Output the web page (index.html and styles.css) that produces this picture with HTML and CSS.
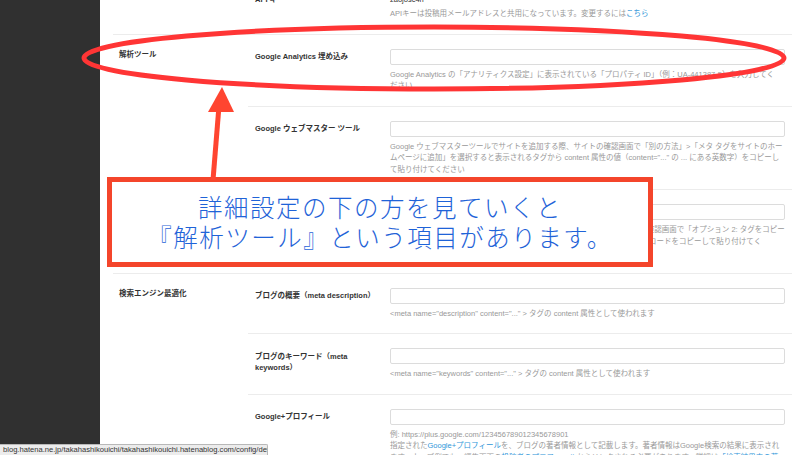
FILE: index.html
```html
<!DOCTYPE html>
<html lang="ja">
<head>
<meta charset="utf-8">
<title>詳細設定</title>
<link rel="stylesheet" href="styles.css">
</head>
<body>
<div class="page">
  <aside class="sidebar"></aside>
  <main class="main">
    <section class="section first">
      <div class="section-label"></div>
      <div class="rows">
        <div class="row">
          <div class="row-label top">API キー</div>
          <div class="field">
            <div class="value">zaojosc4n</div>
            <p class="desc tight">APIキーは投稿用メールアドレスと共用になっています。変更するには<a href="#">こちら</a></p>
          </div>
        </div>
      </div>
    </section>

    <section class="section">
      <div class="section-label">解析ツール</div>
      <div class="rows">
        <div class="row">
          <div class="row-label">Google Analytics 埋め込み</div>
          <div class="field">
            <div class="input"></div>
            <p class="desc">Google Analytics の「アナリティクス設定」に表示されている「プロパティ ID」（例：UA-441387-5）を入力してく<br>ださい</p>
          </div>
        </div>
        <div class="row">
          <div class="row-label">Google ウェブマスター ツール</div>
          <div class="field">
            <div class="input"></div>
            <p class="desc">Google ウェブマスターツールでサイトを追加する際、サイトの確認画面で「別の方法」&gt;「メタ タグをサイトのホー<br>ムページに追加」を選択すると表示されるタグから content 属性の値（content="..." の ... にある英数字）をコピーし<br>て貼り付けてください</p>
          </div>
        </div>
        <div class="row">
          <div class="row-label">Bing Webmaster Tools</div>
          <div class="field">
            <div class="input"></div>
            <p class="desc">Bing Webmaster Tools でサイトを追加する際、サイトの所有権の確認を行う確認画面で「オプション 2: タグをコピー<br>して既定の Web ページに貼り付けます」を選択し、表示されるタグから認証コードをコピーして貼り付けてく<br>ださい</p>
          </div>
        </div>
      </div>
    </section>

    <section class="section">
      <div class="section-label">検索エンジン最適化</div>
      <div class="rows">
        <div class="row">
          <div class="row-label">ブログの概要（meta description）</div>
          <div class="field">
            <div class="input"></div>
            <p class="desc">&lt;meta name="description" content="..." &gt; タグの content 属性として使われます</p>
          </div>
        </div>
        <div class="row">
          <div class="row-label">ブログのキーワード（meta keywords）</div>
          <div class="field">
            <div class="input"></div>
            <p class="desc">&lt;meta name="keywords" content="..." &gt; タグの content 属性として使われます</p>
          </div>
        </div>
        <div class="row">
          <div class="row-label">Google+プロフィール</div>
          <div class="field">
            <div class="input"></div>
            <p class="desc">例: https://plus.google.com/123456789012345678901<br>指定された<a href="#">Google+プロフィール</a>を、ブログの著者情報として記載します。著者情報はGoogle検索の結果に表示され<br>ます。ウェブ例でも、編集画面の<a href="#">投稿者のプロフィール</a>からリンクされる必要があります。詳細は<a href="#">「検索結果内の著者情報」</a>をご覧ください</p>
          </div>
        </div>
      </div>
    </section>
  </main>

  <div class="status">blog.hatena.ne.jp/takahashikouichi/takahashikouichi.hatenablog.com/config/detail</div>

  <svg class="marks" width="800" height="455" viewBox="0 0 800 455">
    <ellipse cx="434" cy="58" rx="350" ry="31" fill="none" stroke="#ff3535" stroke-width="5"/>
    <line x1="213" y1="180" x2="219" y2="106" stroke="#ff4530" stroke-width="5"/>
    <polygon points="222,87 208,112 234,112" fill="#ff4530"/>
  </svg>

  <div class="note">
    <p class="note-line">詳細設定の下の方を見ていくと</p>
    <p class="note-line">『解析ツール』という項目があります。</p>
  </div>
</div>
</body>
</html>
```

FILE: styles.css
```css
* { box-sizing: border-box; }

body {
  margin: 0;
  width: 800px;
  height: 455px;
  overflow: hidden;
  background: #fff;
  font-family: "Liberation Sans", "Noto Sans CJK JP", sans-serif;
  color: #333;
}

.page {
  position: relative;
  display: flex;
  width: 800px;
  height: 455px;
  overflow: hidden;
}

.sidebar {
  flex: none;
  width: 100px;
  background: #303030;
}

.main {
  flex: 1;
  padding: 0 8px 0 13px;
  background: #fff;
  overflow: hidden;
}

.section {
  display: flex;
  border-top: 1px solid #ececec;
}

.section.first {
  border-top: none;
  margin-top: -20px;
}

.section-label {
  flex: none;
  width: 135px;
  padding: 14px 0 0 6px;
  font-size: 7.5px;
  line-height: 11.5px;
  font-weight: bold;
  color: #333;
}

.rows {
  flex: 1;
}

.row {
  display: flex;
  padding: 14px 7px 14px 0;
}

.row + .row {
  border-top: 1px solid #ececec;
}

.row-label {
  flex: none;
  width: 142px;
  padding: 2.5px 10px 0 7px;
  font-size: 7.5px;
  line-height: 11.5px;
  font-weight: bold;
  color: #333;
}

.row-label.top {
  padding-top: 0;
}

.field {
  flex: 1;
}

.value {
  font-size: 7.5px;
  line-height: 11.5px;
  color: #333;
}

.input {
  height: 16px;
  border: 1px solid #dcdcdc;
  border-radius: 2px;
  background: #fff;
}

.desc {
  margin: 4px 0 0;
  font-size: 7.5px;
  line-height: 11.5px;
  color: #999;
}

.desc.tight {
  margin-top: 2.5px;
}

.desc a {
  color: #2f96d9;
  text-decoration: none;
}

.status {
  position: absolute;
  left: 0;
  bottom: 0;
  width: 268px;
  height: 11px;
  padding-left: 3px;
  background: #ececec;
  border-top: 1px solid #b8b8b8;
  border-right: 1px solid #b8b8b8;
  border-top-right-radius: 2px;
  font-size: 7.6px;
  line-height: 10px;
  color: #333;
  white-space: nowrap;
  overflow: hidden;
  z-index: 3;
}

.marks {
  position: absolute;
  left: 0;
  top: 0;
  z-index: 2;
  pointer-events: none;
}

.note {
  position: absolute;
  left: 107px;
  top: 177px;
  width: 546px;
  height: 90px;
  border: 5px solid #f4452b;
  background: #fff;
  display: flex;
  flex-direction: column;
  justify-content: center;
  align-items: center;
  z-index: 1;
}

.note-line {
  margin: 0;
  font-family: "Noto Sans CJK JP", sans-serif;
  font-weight: 300;
  font-size: 24.5px;
  line-height: 30px;
  letter-spacing: 1.5px;
  color: #1f63d8;
  white-space: nowrap;
}
```
